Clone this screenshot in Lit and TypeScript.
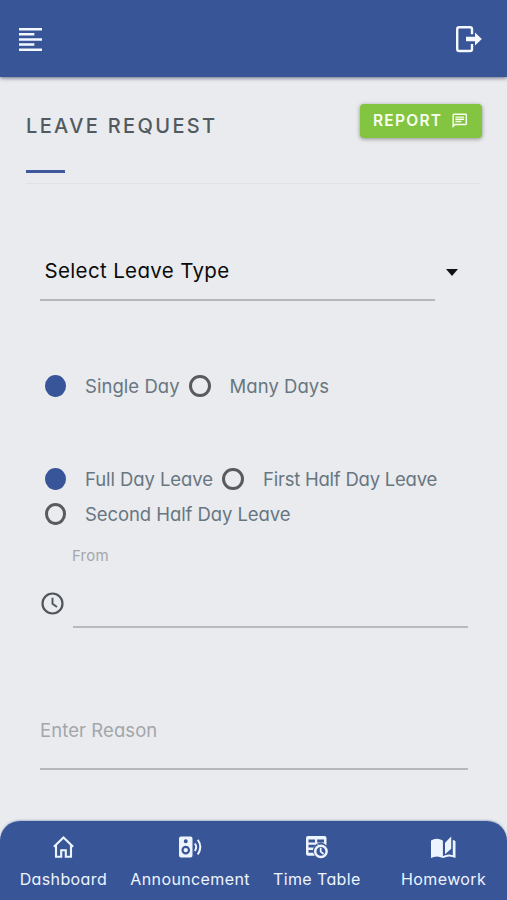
import { LitElement, html, css, svg } from "lit";
import { customElement, property } from "lit/decorators.js";

const icons: Record<string, unknown> = {
  menu: svg`<path d="M0 1.25h23.4M0 6.45h15.6M0 11.65h23.4M0 16.85h15.6M0 22.05h23.4" stroke="currentColor" stroke-width="2.6" fill="none"/>`,
  logout: svg`<path d="M16 8.200V3.2Q16 1.2 14 1.2H3.2Q1.2 1.2 1.2 3.2V23Q1.2 25 3.2 25H14Q16 25 16 23V18" stroke="currentColor" stroke-width="2.4" fill="none"/><path d="M10 10.7H19V6.500L25.8 13L19 19.500V15.3H10Z" fill="currentColor"/>`,
  chat: svg`<path fill="currentColor" d="M4 4h16v12H5.17L4 17.17V4m0-2c-1.1 0-1.99.9-1.99 2L2 22l4-4h14c1.1 0 2-.9 2-2V4c0-1.1-.9-2-2-2H4zm2 10h8v2H6v-2zm0-3h12v2H6V9zm0-3h12v2H6V6z"/>`,
  clock: svg`<circle cx="11.5" cy="11.5" r="10" fill="none" stroke="currentColor" stroke-width="2.2"/><path d="M11.5 5.8V11.8L16 15" fill="none" stroke="currentColor" stroke-width="1.9"/>`,
  home: svg`<path d="M0.9 10.8L10.5 1.5L20.1 10.8M3 9V20.8H8.2V14.2H12.8V20.8H18V9" fill="none" stroke="currentColor" stroke-width="2.1"/>`,
  speaker: svg`<path fill-rule="evenodd" fill="currentColor" d="M2 0.500H11.5Q13.5 0.500 13.5 2.500V19.500Q13.5 21.500 11.5 21.500H2Q0 21.500 0 19.500V2.500Q0 0.500 2 0.500ZM6.75 3.300A2 2 0 1 0 6.75 7.300A2 2 0 1 0 6.75 3.300ZM6.75 9.8A4.3 4.3 0 1 0 6.75 18.4A4.3 4.3 0 1 0 6.75 9.8Z"/><circle cx="6.75" cy="14.1" r="2.2" fill="currentColor"/><path d="M15.8 7.500Q18.6 11 15.8 15M18.800 3.8Q23.8 11 18.800 18.500" fill="none" stroke="currentColor" stroke-width="2"/>`,
  table: svg`<path fill-rule="evenodd" fill="currentColor" d="M2 0H18.5Q20.5 0 20.5 2V9.5A7.5 7.5 0 0 0 8.8 19.8H2Q0 19.8 0 17.8V2Q0 0 2 0ZM2.5 3.6V6.4H9V3.6ZM11.2 3.6V6.4H18V3.6ZM2.5 8.8V11.5H7.6L9 9.8V8.8ZM11.2 8.400V9.300L13.500 8.400ZM2.5 14V16.8H7V14Z"/><circle cx="14.9" cy="15.4" r="5.7" fill="none" stroke="currentColor" stroke-width="2.5"/><path d="M14.7 11.8V15.6L17.6 18" fill="none" stroke="currentColor" stroke-width="1.8"/>`,
  book: svg`<path fill="currentColor" d="M0 4.5Q5.5 1.2 11.9 4.5V22Q5.5 18.9 0 22Z"/><path fill="currentColor" d="M14 6.8L20.2 0.5V12.8L14 18.300Z"/><path d="M21.800 3.8Q24.5 4.8 24.5 5.3V22Q18.3 18.9 12.2 22L11.7 21V20.300Q17 17.300 21.800 19.2Z" fill="currentColor"/>`,
};

@customElement("ui-icon")
class UiIcon extends LitElement {
  @property() name = "";
  @property() box = "0 0 24 24";
  static styles = css`
    :host { display: block; flex: none; }
    .glyph { display: block; width: 100%; height: 100%; overflow: visible; }
  `;
  render() {
    return html`<svg class="glyph" viewBox=${this.box} aria-hidden="true">${icons[this.name]}</svg>`;
  }
}

@customElement("radio-option")
class RadioOption extends LitElement {
  @property({ type: Boolean }) checked = false;
  static styles = css`
    :host { display: flex; align-items: center; height: 35.5px; white-space: nowrap; }
    .dot { box-sizing: border-box; width: 21.5px; height: 22px; margin-right: 19px; border: 3px solid #5a5a5e; border-radius: 50%; }
    .dot.on { background: #39559a; border-color: #39559a; }
  `;
  render() {
    return html`<span class="dot ${this.checked ? "on" : ""}"></span><slot></slot>`;
  }
}

@customElement("app-root")
class AppRoot extends LitElement {
  static styles = css`
    :host {
      display: flex; flex-direction: column; box-sizing: border-box; height: 900px; overflow: hidden;
      background: #e9ebee; color: #687681;
      font-family: Inter, "Open Sans", sans-serif; font-feature-settings: "cv11";
    }
    .top {
      flex: none; height: 77px; box-sizing: border-box; padding: 0 25px 0 18.5px;
      display: flex; justify-content: space-between; align-items: center;
      background: #385597; color: #f4f8ff; box-shadow: 0 1px 4px rgba(30, 35, 70, .65);
    }
    .menu { width: 23px; height: 23px; margin-top: 2px; }
    .logout { width: 26px; height: 26px; margin-top: 1px; }
    .heading { height: 106.5px; flex: none; margin: 0 26px; box-sizing: border-box; border-bottom: 1px solid #dfe1e4; display: flex; justify-content: space-between; }
    .title-wrap { display: flex; flex-direction: column; justify-content: space-between; }
    .title { margin: 34px 0 0; font-size: 20px; line-height: 30px; font-weight: 500; letter-spacing: 2.35px; color: #515a60; white-space: nowrap; }
    .accent { width: 39px; height: 3px; margin-bottom: 9.5px; background: #40579b; }
    .report {
      width: 122px; height: 34px; margin: 27px -1px 0 0; padding: 0 14px 1px 13px; border: 0; border-radius: 4px; box-sizing: border-box;
      display: flex; align-items: center; justify-content: space-between; background: #83c441; color: #f8fff0;
      font: 600 15.5px Inter, sans-serif; letter-spacing: 1.25px; box-shadow: 0 1px 4px rgba(0, 0, 0, .4);
    }
    .chat { width: 17.5px; height: 17.5px; }
    .form { flex: 1; padding: 56.5px 39px 0 40px; display: flex; flex-direction: column; }
    .select { display: flex; align-items: flex-start; height: 61px; flex: none; }
    .value { box-sizing: border-box; width: 395px; height: 61px; padding-left: 4.5px; border-bottom: 2px solid #b5b7bc; line-height: 61px; font-size: 20.5px; letter-spacing: .35px; color: #0b0b0d; }
    .caret { margin: 29px 0 0 11px; border: 6.5px solid transparent; border-top: 7px solid #111; border-bottom: 0; }
    .options { flex: none; display: flex; flex-wrap: wrap; column-gap: 9.5px; padding-left: 4.5px; font-size: 18.5px; }
    .span { margin-top: 67.5px; letter-spacing: .04px; }
    .part { margin-top: 57px; letter-spacing: -.08px; }
    .tight { letter-spacing: -.23px; }
    .from { display: grid; grid-template-columns: 32.5px 1fr; flex: none; height: 96px; align-items: end; }
    .from-label { grid-column: 2; align-self: start; font-size: 15px; line-height: 20px; letter-spacing: .2px; color: #a4a7ac; margin: 14px 0 0 -.5px; }
    .clock { width: 23px; height: 23px; margin: 0 0 13px 1px; color: #50545b; }
    .line { height: 2px; background: #b7babe; }
    .reason { flex: none; height: 60px; margin-top: 81.5px; box-sizing: border-box; border-bottom: 2px solid #b5b7bc; font-size: 18.5px; line-height: 41px; letter-spacing: .08px; color: #a3a6ab; }
    .nav {
      flex: none; height: 79px; box-sizing: border-box; border-radius: 20px 20px 0 0;
      display: grid; grid-template-columns: repeat(4, 1fr); background: #385597; color: #edf4ff;
      box-shadow: 0 -1px 2px rgba(56, 85, 151, .35);
    }
    .tab { display: flex; flex-direction: column; align-items: center; white-space: nowrap; font-size: 16px; line-height: 24px; letter-spacing: .38px; }
    .tab-icon { height: 22px; margin: 15px 0 9px; }
    .home { width: 21px; }
    .speaker { width: 23px; }
    .table { width: 22px; }
    .book { width: 25px; }
  `;

  private tabs = [
    { icon: "home", box: "0 0 21 22", label: "Dashboard" },
    { icon: "speaker", box: "0 0 23 22", label: "Announcement" },
    { icon: "table", box: "0 0 22 22", label: "Time Table" },
    { icon: "book", box: "0 0 25 22", label: "Homework" },
  ];

  render() {
    return html`
      <header class="top">
        <ui-icon class="menu" name="menu" box="0 0 23.4 23.4"></ui-icon>
        <ui-icon class="logout" name="logout" box="0 0 26 26"></ui-icon>
      </header>
      <section class="heading">
        <div class="title-wrap"><h1 class="title">LEAVE REQUEST</h1><div class="accent"></div></div>
        <button class="report">REPORT<ui-icon class="chat" name="chat"></ui-icon></button>
      </section>
      <main class="form">
        <div class="select"><div class="value">Select Leave Type</div><span class="caret"></span></div>
        <div class="options span">
          <radio-option checked>Single Day</radio-option>
          <radio-option>Many Days</radio-option>
        </div>
        <div class="options part">
          <radio-option checked>Full Day Leave</radio-option>
          <radio-option class="tight">First Half Day Leave</radio-option>
          <radio-option>Second Half Day Leave</radio-option>
        </div>
        <div class="from">
          <span class="from-label">From</span>
          <ui-icon class="clock" name="clock" box="0 0 23 23"></ui-icon>
          <div class="line"></div>
        </div>
        <div class="reason">Enter Reason</div>
      </main>
      <nav class="nav">
        ${this.tabs.map((t) => html`<div class="tab"><ui-icon class="tab-icon ${t.icon}" name=${t.icon} box=${t.box}></ui-icon><span>${t.label}</span></div>`)}
      </nav>
    `;
  }
}
